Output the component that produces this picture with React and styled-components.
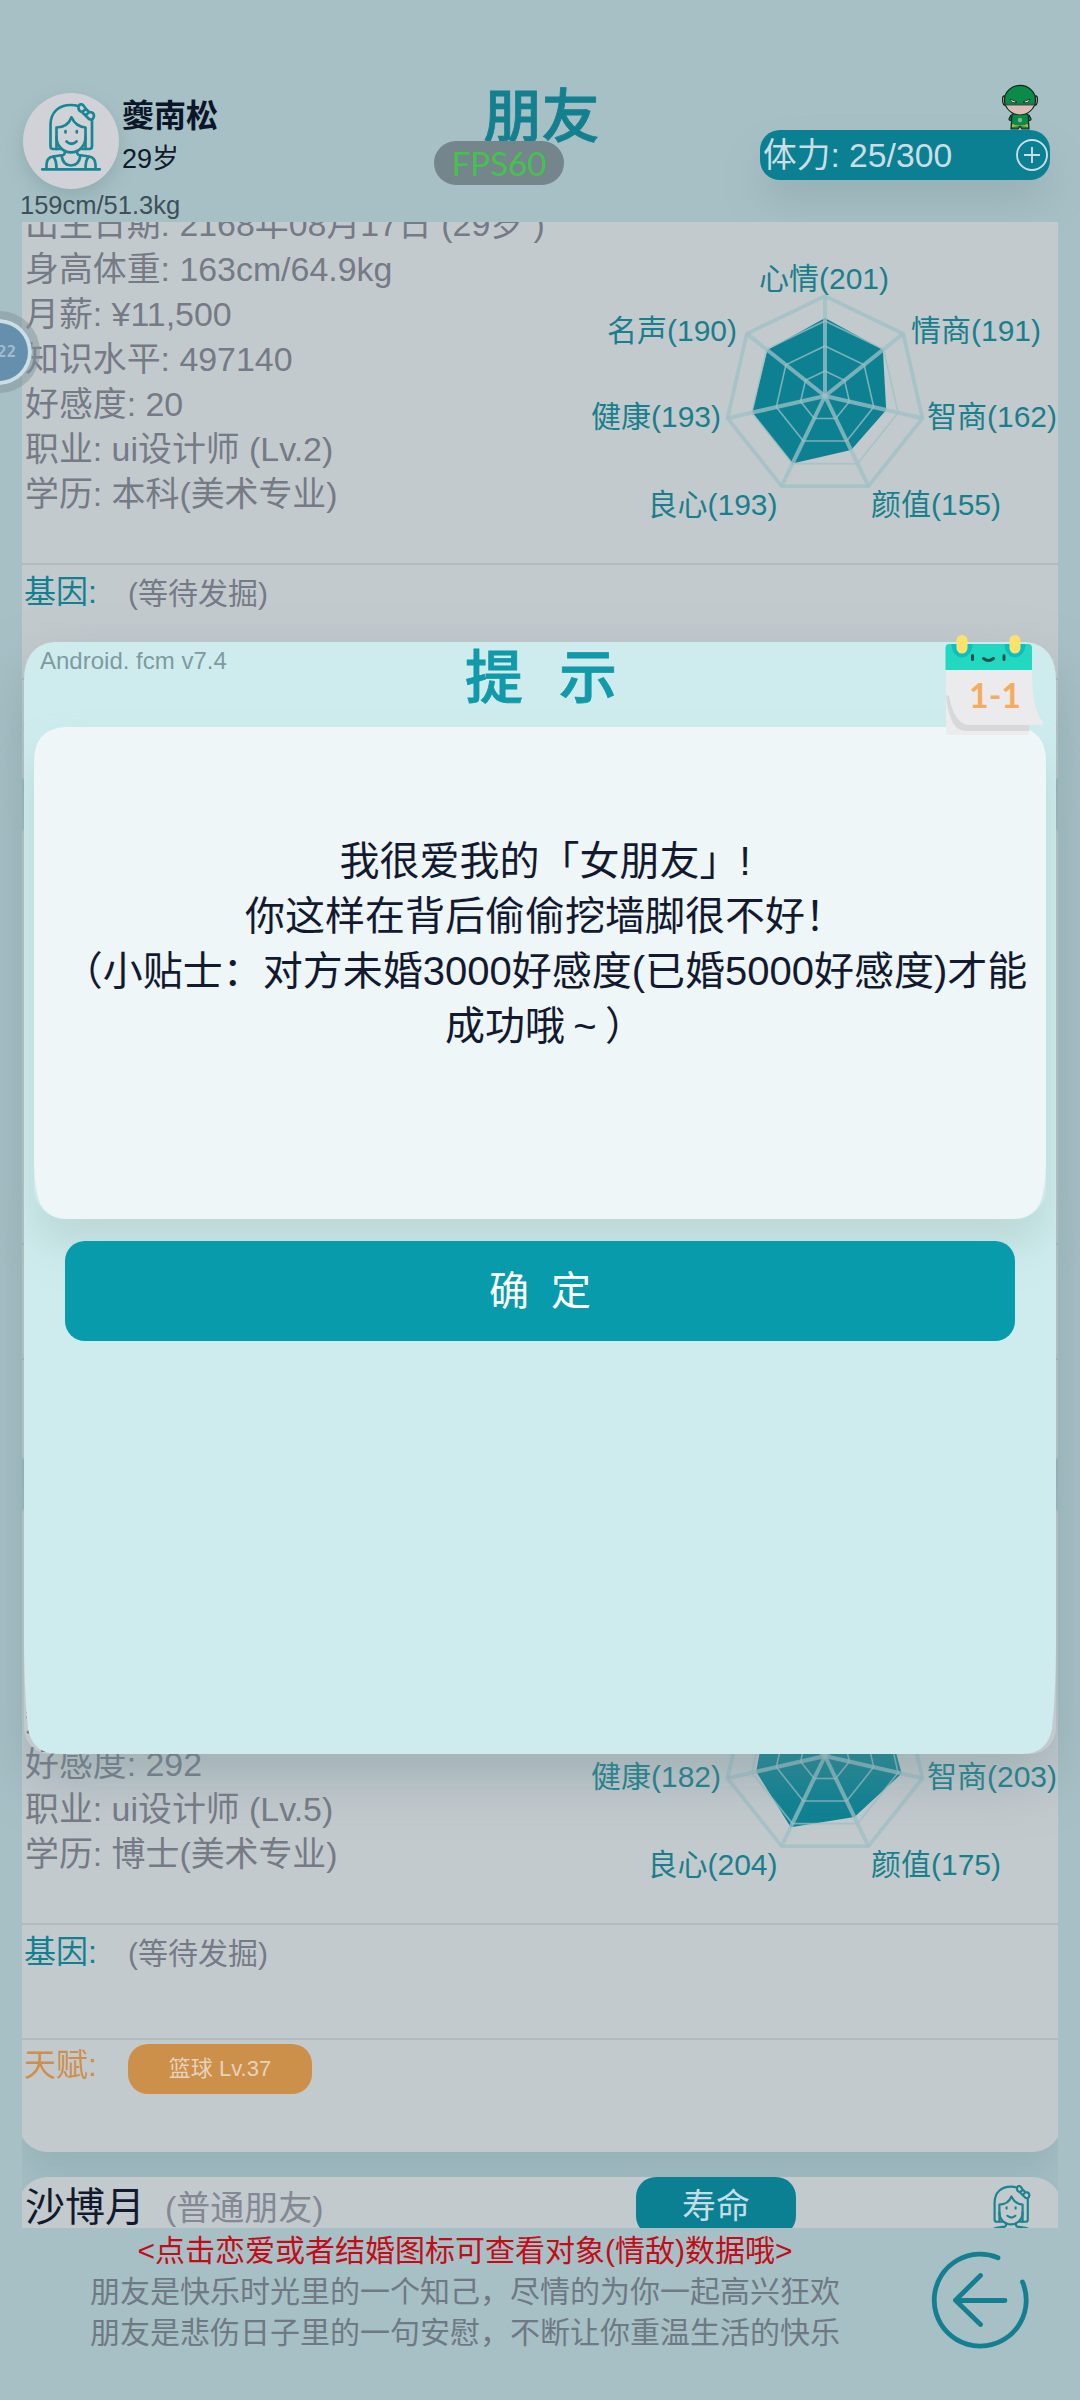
import React from "react";
import styled, { createGlobalStyle } from "styled-components";

const c = {
  page: "#a7c0c6",
  card: "#c3cace",
  line: "#b1bbc2",
  muted: "#767a86",
  teal: "#0a8092",
  chartText: "#1a7f8c",
  ink: "#131a30",
  orange: "#cd904a",
};

const GlobalStyle = createGlobalStyle`
  * { box-sizing: border-box; }
  html, body { margin: 0; padding: 0; }
  body {
    background: ${c.page};
    font-family: "Liberation Sans", "Noto Sans CJK SC", sans-serif;
  }
`;

const Screen = styled.div`
  position: relative;
  width: 1080px;
  height: 2400px;
  overflow: hidden;
  display: flex;
  flex-direction: column;
  background: ${c.page};
`;

/* ---------- header ---------- */

const Header = styled.header`
  display: grid;
  grid-template-columns: 360px 363px 1fr;
  height: 222px;
  flex: none;
`;

const Profile = styled.div`
  display: grid;
  grid-template-columns: 96px 1fr;
  grid-template-rows: 96px 34px;
  column-gap: 3px;
  align-content: start;
  padding: 93px 0 0 23px;
`;

const Avatar = styled.div`
  width: 96px;
  height: 96px;
  border-radius: 50%;
  background: #d0d2d8;
  box-shadow: 0 8px 18px rgba(80, 120, 120, 0.25);
  display: flex;
  justify-content: center;
  padding-top: 10px;
`;

const ProfileText = styled.div`
  display: flex;
  flex-direction: column;
`;

const PlayerName = styled.div`
  font-size: 32px;
  line-height: 46px;
  font-weight: 700;
  color: #0c1629;
`;

const PlayerAge = styled.div`
  font-size: 27px;
  line-height: 40px;
  color: #0f1c2b;
`;

const PlayerBody = styled.div`
  grid-column: 1 / -1;
  margin-left: -3px;
  font-size: 25.5px;
  line-height: 32px;
  color: #3d4f59;
`;

const PageTitle = styled.h1`
  margin: 83px 0 0;
  text-align: center;
  font-size: 58px;
  line-height: 68px;
  font-weight: 500;
  -webkit-text-stroke: 0.8px #14808f;
  color: #14808f;
`;

const HeaderRight = styled.div`
  display: flex;
  flex-direction: column;
  align-items: flex-end;
  padding: 84px 30px 0 0;
`;

const HeroSlot = styled.div`
  height: 46px;
  margin-right: 12px;
`;

const Stamina = styled.div`
  width: 290px;
  height: 50px;
  padding: 0 2px 0 3px;
  border-radius: 20px;
  display: flex;
  align-items: center;
  justify-content: space-between;
  background: ${c.teal};
  color: #cbdde5;
  font-size: 33.7px;
  line-height: 50px;
  box-shadow: 0 24px 40px -4px rgba(110, 140, 140, 0.32);
`;

/* ---------- friend list ---------- */

const List = styled.main`
  flex: none;
  height: 2006px;
  margin: 0 22px;
  overflow: hidden;
`;

const Scroll = styled.div`
  display: flex;
  flex-direction: column;
  gap: 25px;
  margin: -85px -4px 0;
`;

const Card = styled.section`
  flex: none;
  height: 655px;
  border-radius: 30px;
  background: ${c.card};
  box-shadow: 0 16px 40px rgba(110, 145, 150, 0.32);
`;

const NameRow = styled.div`
  display: grid;
  grid-template-columns: 140px 471px 160px 1fr;
  height: 64px;
  padding-left: 7px;
`;

const FriendName = styled.div`
  font-size: 40px;
  line-height: 61px;
  color: ${c.ink};
`;

const Relation = styled.div`
  font-size: 34px;
  line-height: 62px;
  color: #848894;
`;

const LifeButton = styled.button`
  height: 59px;
  padding: 0;
  border: 0;
  border-radius: 20px;
  background: ${c.teal};
  color: #c5dde4;
  font: inherit;
  font-size: 34px;
  line-height: 59px;
`;

const IconSlot = styled.div`
  display: flex;
  justify-content: flex-end;
  padding: 8px 27px 0 0;
`;

const Body = styled.div`
  display: flex;
  justify-content: space-between;
  height: 362px;
`;

const InfoList = styled.div`
  display: flex;
  flex-direction: column;
  justify-content: flex-end;
  height: 316px;
  padding-left: 7px;
`;

const InfoRow = styled.div`
  font-size: 33.9px;
  line-height: 45px;
  white-space: pre;
  color: ${c.muted};
`;

const ChartSlot = styled.div`
  width: 482px;
  padding-top: 50px;
`;

const Section = styled.div`
  display: grid;
  grid-template-columns: 104px 1fr;
  height: ${(p) => p.$height}px;
  padding: 0 0 0 6px;
  border-top: 2px solid ${c.line};
`;

const SectionLabel = styled.div`
  font-size: 32px;
  line-height: ${(p) => p.$line}px;
  color: ${(p) => p.$color};
`;

const SectionText = styled.div`
  font-size: 30px;
  line-height: 57px;
  color: ${c.muted};
`;

const Tag = styled.div`
  width: 184px;
  height: 50px;
  margin-top: 4px;
  border-radius: 20px;
  background: ${c.orange};
  color: #e6d3bd;
  text-align: center;
  font-size: 22px;
  line-height: 50px;
`;

/* ---------- footer ---------- */

const Footer = styled.footer`
  display: flex;
  flex: none;
  height: 172px;
`;

const FooterText = styled.div`
  width: 930px;
  padding-top: 2px;
  text-align: center;
`;

const FooterLine = styled.div`
  font-size: 30px;
  line-height: 41px;
  color: ${(p) => p.$color || "#6f7983"};
`;

const BackButton = styled.button`
  width: 100px;
  height: 100px;
  margin: 22px 0 0;
  padding: 0;
  border: 0;
  background: none;
`;

/* ---------- dialog ---------- */

const Dialog = styled.div`
  position: absolute;
  left: 24px;
  top: 642px;
  width: 1032px;
  height: 1112px;
  border-radius: 30px 30px 26px 26px;
  display: flex;
  flex-direction: column;
  align-items: center;
  box-shadow: 0 24px 56px rgba(110, 140, 145, 0.42);
  isolation: isolate;

  &::before {
    content: "";
    position: absolute;
    inset: 0;
    z-index: -1;
    background: #ceecee;
    clip-path: path("M30 0H1002Q1032 3 1032 40V990Q1032 1050 1028 1087Q1023 1112 998 1112H34Q9 1112 4 1087Q0 1050 0 990V40Q0 3 30 0Z");
  }
`;

const DialogHead = styled.div`
  display: grid;
  grid-template-columns: 341px 1fr 339px;
  width: 100%;
  height: 85px;
  flex: none;
`;

const Version = styled.div`
  padding-left: 16px;
  font-size: 24px;
  line-height: 38px;
  color: #809a9f;
`;

const DialogTitle = styled.h2`
  margin: 0;
  text-align: center;
  font-size: 58px;
  line-height: 72px;
  font-weight: 500;
  word-spacing: 20px;
  -webkit-text-stroke: 0.8px #119aaa;
  color: #119aaa;
`;

const CalendarSlot = styled.div`
  position: absolute;
  left: 921px;
  top: -7px;
  z-index: 1;
`;

const Panel = styled.div`
  position: relative;
  width: 1012px;
  height: 492px;
  flex: none;
  padding: 107px 0 0 10px;
  text-align: center;
  border-radius: 31px;
  box-shadow: 0 28px 40px rgba(165, 190, 185, 0.42);
  isolation: isolate;

  &::before {
    content: "";
    position: absolute;
    inset: 0;
    z-index: -1;
    background: #eef6f8;
    clip-path: path("M31 0H981Q1012 2 1012 34V430Q1012 460 1006 476Q998 492 978 492H34Q14 492 6 476Q0 460 0 430V34Q0 2 31 0Z");
  }
`;

const Message = styled.div`
  font-size: 40px;
  line-height: 55px;
  white-space: nowrap;
  color: ${c.ink};
`;

const Wide = styled.span`
  display: inline-block;
  width: 40px;
  text-align: center;
`;

const Confirm = styled.button`
  width: 950px;
  height: 100px;
  margin: 22px 0 0;
  padding: 0;
  border: 0;
  border-radius: 20px;
  background: #089bac;
  color: #fff;
  font: inherit;
  font-size: 40px;
  line-height: 98px;
  word-spacing: 11px;
  position: relative;
`;

/* ---------- floating widgets ---------- */

const Fps = styled.div`
  position: absolute;
  left: 434px;
  top: 141px;
  width: 130px;
  height: 44px;
  border-radius: 22px;
  background: #74858b;
  color: #45c24e;
  text-align: center;
  font-family: Lato, sans-serif;
  font-size: 33px;
  line-height: 44px;
`;

const Ball = styled.div`
  position: absolute;
  left: -42px;
  top: 311px;
  width: 82px;
  height: 82px;
  border-radius: 50%;
  border: 8px solid rgba(130, 148, 152, 0.5);
  background: #668fae padding-box;
  box-shadow: inset 0 0 0 4px #c9dee6;
  display: flex;
  align-items: center;
  justify-content: flex-end;
  padding-right: 16px;
  color: #a3bccb;
  font-family: "DejaVu Sans Mono", monospace;
  font-weight: 700;
  font-size: 15.5px;
`;

/* ---------- drawings ---------- */

const GirlIcon = ({ width, color }) => (
  <svg width={width} height={(width * 68) / 60} viewBox="0 0 60 68" fill="none" stroke={color} strokeWidth="2.700" strokeLinecap="round" strokeLinejoin="round">
    <path d="M20 46H12Q9.500 46 9.500 43V22C9.500 9 18 2 30 2Q34 2 37 3M51 18V43Q51 46 48.500 46H41" />
    <path d="M15.500 24.500V34C15.500 43 22 49.300 30 49.300S44.500 43 44.500 34V24.500C38 24 33 20 30.500 14.300C28 21 23 24.500 15.500 24.500Z" />
    <path d="M15.500 34V46M44.500 34V46" />
    <path d="M24.500 28V29.500M35.800 28V29.500M25.500 38.500Q30.500 43 35.500 38.500" />
    <path d="M37.500 3.500Q39 0 42 2L45 6L41 9Q37 8 37.500 3.500ZM45 6L48 9L44.500 12.500L41 9ZM48 9Q53 9 53 13Q52 18 48 16L44.500 12.500Z" />
    <path d="M1.200 66.300H58.800M5.500 66V62Q5.500 54.500 12 53.500L22 52Q24 51.500 24 48M54.500 66V62Q54.500 54.500 48 53.500L38 52Q36 51.500 36 48" />
    <path d="M20.500 52.500Q22 62.500 30 62.500T39.500 52.500M12.500 54Q15.500 57 15.500 66M47.500 54Q44.500 57 44.500 66" />
  </svg>
);

const HeroIcon = () => (
  <svg width="36" height="46" viewBox="0 0 36 46" stroke="#10261c" strokeWidth="1.200" strokeLinejoin="round">
    <path d="M3 12Q0 11 .6 17Q1 22 4 21ZM33 12Q36 11 35.400 17Q35 22 32 21Z" fill="#c7a48c" />
    <path d="M9 31L7 35Q7 37 10 36L12 34M27 31L29 35Q29 37 26 36L24 34" fill="#0b8a4a" />
    <path d="M10 30H26L27 45H20L18 42L16 45H9Z" fill="#0b8a4a" />
    <path d="M10 40Q18 43 26 40V43L18 42L10 43Z" fill="#c9b32f" stroke="none" />
    <ellipse cx="18" cy="16" rx="15.500" ry="14.600" fill="#0b8a4a" />
    <path d="M4 21H32Q28 30 18 30.400Q8 30 4 21Z" fill="#d9bdb6" stroke="none" />
    <path d="M3.500 20.500H32.500" stroke="#345c4a" strokeWidth="2" />
    <path d="M8 15L15 18Q10 20.500 8 15ZM28 15L21 18Q26 20.500 28 15Z" fill="#dfe6e4" strokeWidth=".8" />
    <circle cx="18" cy="36" r="2.200" fill="#74bd8f" stroke="none" />
  </svg>
);

const PlusIcon = () => (
  <svg width="32" height="32" viewBox="0 0 32 32" fill="none" stroke="#cbdde5" strokeWidth="1.900">
    <circle cx="16" cy="16" r="15" />
    <path d="M16 8V24M8 16H24" />
  </svg>
);

const BackIcon = () => (
  <svg width="100" height="100" viewBox="930 2250 100 100" fill="none" stroke="#147f90" strokeWidth="4.800" strokeLinecap="round" strokeLinejoin="round">
    <path d="M998 2257.700A46 46 0 1 0 1022.500 2282" />
    <path d="M1005 2300.500H955.500M980.500 2275.500L955.500 2300.200L980.500 2324.500" />
  </svg>
);

const CalendarIcon = () => (
  <svg width="100" height="101" viewBox="0 0 100 101">
    <path d="M1 34H84V99Q84 100 82 100H1Z" fill="#ececee" />
    <path d="M1 60Q3 84 12 93Q16 96 22 96H84V88Z" fill="#d8d8da" />
    <path d="M1 34H87C87 62 90 78 98 87Q99 90 96 90H24Q15 90 9 78Q2 62 1 34Z" fill="#ebebed" />
    <path d="M0.500 35V13Q.5 9 4.500 9H83Q87 9 87 13V35Z" fill="#22d8c0" />
    <path d="M6.500 9A10.500 13.500 0 0 0 27.500 9ZM59.500 9A10.500 13.500 0 0 0 80.500 9Z" fill="#0cbfc2" />
    <rect x="11.500" y="0" width="11" height="18.500" rx="5.500" fill="#fce26b" />
    <rect x="64.500" y="0" width="11" height="18.500" rx="5.500" fill="#fce26b" />
    <path d="M27.500 20.500V24.500M59 20.500V24.500M38.500 23.500Q43.500 27.500 48.500 23.500" fill="none" stroke="#24504f" strokeWidth="3" strokeLinecap="round" />
    <text x="50" y="73" textAnchor="middle" fontSize="34" fontWeight="700" fontFamily="Lato, sans-serif" fill="#f2ad62">1-1</text>
  </svg>
);

const CX = 245;
const CY = 145;
const point = (i, r) => {
  const a = (Math.PI * 2 * i) / 7 - Math.PI / 2;
  return [CX + r * Math.cos(a), CY + r * Math.sin(a)];
};
const ring = (radii) => radii.map((r, i) => point(i, r).map((n) => n.toFixed(1)).join(",")).join(" ");
const labelSpots = [
  [179, 38],
  [331, 90],
  [347, 176],
  [291, 264],
  [67.500, 264],
  [11, 176],
  [27, 90],
];

const Radar = ({ values, labels }) => (
  <svg width="482" height="290" viewBox="0 0 482 290">
    <polygon points={ring(values.map((v) => v / 2.58))} fill="#0d8192" />
    <g fill="none" stroke="#9dc0c6" strokeOpacity="0.75">
      {[25, 50, 75].map((r) => (
        <polygon key={r} points={ring(Array(7).fill(r))} strokeWidth="1.600" />
      ))}
      <polygon points={ring(Array(7).fill(100))} strokeWidth="3.800" />
      {values.map((_, i) => {
        const [x, y] = point(i, 100);
        return <line key={i} x1={CX} y1={CY} x2={x} y2={y} strokeWidth="4" />;
      })}
    </g>
    {labels.map((text, i) =>
      text ? (
        <text key={i} x={labelSpots[i][0]} y={labelSpots[i][1]} fontSize="30" fill={c.chartText}>
          {text}
        </text>
      ) : null
    )}
  </svg>
);

/* ---------- data ---------- */

const friends = [
  {
    info: [
      "出生日期: 2168年08月17日 (29岁 )",
      "身高体重: 163cm/64.9kg",
      "月薪: ¥11,500",
      "知识水平: 497140",
      "好感度: 20",
      "职业: ui设计师 (Lv.2)",
      "学历: 本科(美术专业)",
    ],
    values: [201, 191, 162, 155, 193, 193, 190],
    labels: ["心情(201)", "情商(191)", "智商(162)", "颜值(155)", "良心(193)", "健康(193)", "名声(190)"],
    gene: "(等待发掘)",
  },
  {},
  {
    info: ["知", "好感度: 292", "职业: ui设计师 (Lv.5)", "学历: 博士(美术专业)"],
    values: [195, 195, 203, 175, 204, 182, 190],
    labels: [null, null, "智商(203)", "颜值(175)", "良心(204)", "健康(182)", null],
    gene: "(等待发掘)",
    talent: "篮球 Lv.37",
  },
  { name: "沙博月", relation: "(普通朋友)", action: "寿命" },
];

const FriendCard = ({ name, relation, action, info, values, labels, gene, talent }) => (
  <Card>
    <NameRow>
      {name && (
        <>
          <FriendName>{name}</FriendName>
          <Relation>{relation}</Relation>
          <LifeButton>{action}</LifeButton>
          <IconSlot>
            <GirlIcon width={48} color="#1c8390" />
          </IconSlot>
        </>
      )}
    </NameRow>
    <Body>
      <InfoList>
        {info?.map((line) => (
          <InfoRow key={line}>{line}</InfoRow>
        ))}
      </InfoList>
      <ChartSlot>{values && <Radar values={values} labels={labels} />}</ChartSlot>
    </Body>
    <Section $height={115}>
      {gene && (
        <>
          <SectionLabel $color="#128091" $line={55}>
            基因:
          </SectionLabel>
          <SectionText>{gene}</SectionText>
        </>
      )}
    </Section>
    <Section $height={114}>
      {talent && (
        <>
          <SectionLabel $color={c.orange} $line={51}>
            天赋:
          </SectionLabel>
          <Tag>{talent}</Tag>
        </>
      )}
    </Section>
  </Card>
);

export default function App() {
  return (
    <>
      <GlobalStyle />
      <Screen>
        <Header>
          <Profile>
            <Avatar>
              <GirlIcon width={60} color="#198793" />
            </Avatar>
            <ProfileText>
              <PlayerName>夔南松</PlayerName>
              <PlayerAge>29岁</PlayerAge>
            </ProfileText>
            <PlayerBody>159cm/51.3kg</PlayerBody>
          </Profile>
          <PageTitle>朋友</PageTitle>
          <HeaderRight>
            <HeroSlot>
              <HeroIcon />
            </HeroSlot>
            <Stamina>
              <span>体力: 25/300</span>
              <PlusIcon />
            </Stamina>
          </HeaderRight>
        </Header>

        <List>
          <Scroll>
            {friends.map((f, i) => (
              <FriendCard key={i} {...f} />
            ))}
          </Scroll>
        </List>

        <Footer>
          <FooterText>
            <FooterLine $color="#c20d18">&lt;点击恋爱或者结婚图标可查看对象(情敌)数据哦&gt;</FooterLine>
            <FooterLine>朋友是快乐时光里的一个知己，尽情的为你一起高兴狂欢</FooterLine>
            <FooterLine>朋友是悲伤日子里的一句安慰，不断让你重温生活的快乐</FooterLine>
          </FooterText>
          <BackButton aria-label="返回">
            <BackIcon />
          </BackButton>
        </Footer>

        <Ball>22</Ball>
        <Fps>FPS60</Fps>

        <Dialog>
          <DialogHead>
            <Version>Android. fcm v7.4</Version>
            <DialogTitle>提 示</DialogTitle>
          </DialogHead>
          <CalendarSlot>
            <CalendarIcon />
          </CalendarSlot>
          <Panel>
            <Message>我很爱我的「女朋友」!</Message>
            <Message>你这样在背后偷偷挖墙脚很不好！</Message>
            <Message>（小贴士：对方未婚3000好感度(已婚5000好感度)才能</Message>
            <Message>
              成功哦<Wide>~</Wide>）
            </Message>
          </Panel>
          <Confirm>确 定</Confirm>
        </Dialog>
      </Screen>
    </>
  );
}
